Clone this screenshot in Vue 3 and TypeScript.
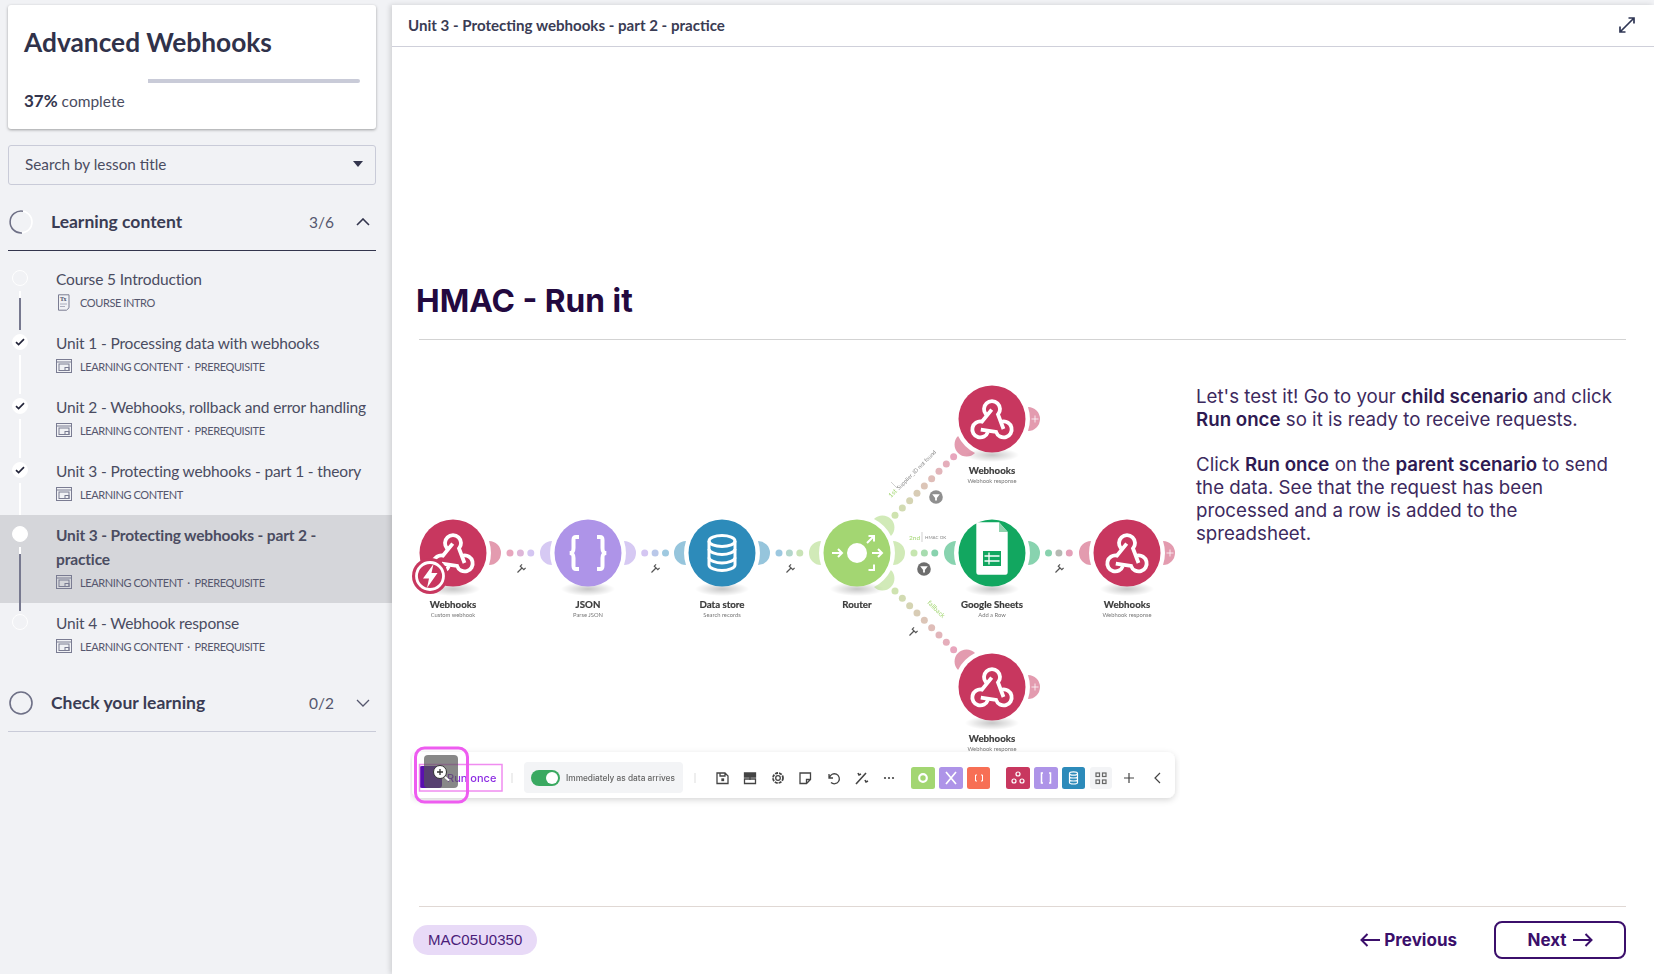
<template>
  <div class="page">
    <aside class="sidebar">
      <div class="course-card">
        <h1 class="course-title">Advanced Webhooks</h1>
        <div class="progress"><div class="progress-done" :style="{ width: '37%' }"></div></div>
        <div class="progress-text"><b>37%</b> complete</div>
      </div>

      <div class="search-select">
        <span>Search by lesson title</span>
        <i class="caret"></i>
      </div>

      <div class="section-head">
        <svg class="ring" width="26" height="26" viewBox="0 0 26 26">
          <circle cx="13" cy="13" r="11" fill="none" stroke="#fff" stroke-width="1.6" />
          <path d="M15 2.2A11 11 0 1 0 14 24" fill="none" stroke="#6e7086" stroke-width="1.6" />
        </svg>
        <span class="section-title">Learning content</span>
        <span class="section-count">3/6</span>
        <svg class="chev" width="14" height="8" viewBox="0 0 14 8"><path d="M1 7l6-6 6 6" fill="none" stroke="#33354d" stroke-width="1.6" /></svg>
      </div>

      <ul class="lessons">
        <li v-for="l in lessons" :key="l.title" class="lesson" :class="{ active: l.state === 'active' }">
          <span class="dot" :class="l.state">
            <svg v-if="l.state === 'done'" width="10" height="8" viewBox="0 0 10 8"><path d="M1 4.2l2.6 2.4L9 1.2" fill="none" stroke="#23253a" stroke-width="1.7" /></svg>
          </span>
          <span v-if="l.line" class="line" :class="l.state">
            <span v-if="l.line === 'dark'" class="line-dark"></span>
          </span>
          <div class="lesson-title">{{ l.title }}</div>
          <div class="lesson-meta">
            <svg v-if="l.intro" class="meta-icon" width="16" height="17" viewBox="0 0 16 17">
              <path d="M2.5 .8h10.5v13l-2.5 2.4H2.500z" fill="none" stroke="#7a7c92" />
              <text x="4" y="7" font-size="6" font-weight="700" fill="#4a4c66" font-family="Liberation Serif, serif">Tx</text>
              <path d="M4 10h7M4 12.500h5" stroke="#9a9cae" stroke-width=".8" />
            </svg>
            <svg v-else class="meta-icon" width="16" height="14" viewBox="0 0 16 14">
              <rect x=".5" y=".5" width="15" height="13" fill="none" stroke="#7a7c92" />
              <path d="M.5 3h15" stroke="#7a7c92" />
              <rect x="3" y="5" width="10" height="6.500" fill="none" stroke="#7a7c92" />
              <rect x="9" y="8.500" width="4" height="3" fill="none" stroke="#7a7c92" />
            </svg>
            <span>{{ l.meta }}</span>
          </div>
        </li>
      </ul>

      <div class="section-head second">
        <svg class="ring" width="26" height="26" viewBox="0 0 26 26">
          <circle cx="13" cy="13" r="11" fill="none" stroke="#6e7086" stroke-width="1.6" />
        </svg>
        <span class="section-title">Check your learning</span>
        <span class="section-count">0/2</span>
        <svg class="chev" width="14" height="8" viewBox="0 0 14 8"><path d="M1 1l6 6 6-6" fill="none" stroke="#55576e" stroke-width="1.3" /></svg>
      </div>
    </aside>

    <main class="main">
      <header class="topbar">
        <span>Unit 3 - Protecting webhooks - part 2 - practice</span>
        <svg width="18" height="18" viewBox="0 0 18 18">
          <path d="M2 16L16 2M10.500 2H16V7.500M2 10.500V16H7.500" fill="none" stroke="#2f3654" stroke-width="1.700" />
        </svg>
      </header>

      <section class="slide">
        <h2 class="slide-title">HMAC - Run it</h2>
        <div class="slide-body">
          <svg class="scenario" width="770" height="440" viewBox="410 370 770 440">
            <defs>
              <radialGradient id="nodeShadow">
                <stop offset="0" stop-color="#000" stop-opacity=".22" />
                <stop offset="1" stop-color="#000" stop-opacity="0" />
              </radialGradient>
              <filter id="barShadow" x="-5%" y="-30%" width="110%" height="170%">
                <feDropShadow dx="0" dy="2" stdDeviation="3" flood-color="#000" flood-opacity=".16" />
              </filter>
            </defs>

            <circle v-for="(d, i) in linkDots" :key="i" :cx="d.x" :cy="d.y" r="3.500" :fill="d.c" />

            <g v-for="w in wrenches" :key="w.x + '-' + w.y" :transform="`translate(${w.x} ${w.y}) rotate(${w.r})`">
              <path d="M0 5V-1M-2.500 -4V-1.500H2.500V-4" fill="none" stroke="#555" stroke-width="1.200" />
            </g>

            <g v-for="f in filters" :key="f.x" :transform="`translate(${f.x} ${f.y})`">
              <circle r="6.800" :fill="f.c" />
              <path d="M-3.800 -2.800H3.800L.9 1V3.500H-.9V1z" fill="#fff" />
            </g>

            <g fill="#a3d672" font-family="Lato, sans-serif" font-size="6.500">
              <text transform="translate(891 498) rotate(-45)">1st</text>
              <text x="909" y="540">2nd</text>
              <text transform="translate(927 603) rotate(45)">fallback</text>
            </g>
            <g fill="#8a8a8a" font-family="Lato, sans-serif" font-size="5.500">
              <text transform="translate(899 490) rotate(-45)">Supplier_ID not found</text>
              <text x="925" y="539" font-size="4.500">HMAC OK</text>
            </g>
            <path d="M897 488l-6-6M922 532v10" stroke="#bbb" stroke-width=".7" />

            <g v-for="n in nodes" :key="n.x + '-' + n.y" :transform="`translate(${n.x} ${n.y})`">
              <ellipse cx="0" cy="36" rx="27" ry="7" fill="url(#nodeShadow)" />
              <path v-for="m in n.moons" :key="m" :transform="`rotate(${m})`" :fill="n.fill" opacity=".5"
                d="M36 -12A12 12 0 0 1 36 12A38 38 0 0 0 36 -12z" />
              <path v-if="n.plus" d="M39.500 0h7M43 -3.500v7" stroke="#fff" stroke-opacity=".75" stroke-width="1" />
              <circle r="33.500" :fill="n.fill" />

              <g v-if="n.kind === 'hook'" fill="none" stroke="#fff" stroke-width="3.800">
                <path v-for="r in [0, 120, 240]" :key="r" :transform="`rotate(${r} 0 3.700)`"
                  d="M-6 -4.500A8 8 0 1 1 6 -4.500L11.500 10" />
              </g>
              <g v-else-if="n.kind === 'json'" fill="none" stroke="#fff" stroke-width="4">
                <path d="M-9 -16H-12C-14 -16 -14.500 -15 -14.500 -13V-5C-14.500 -2 -15 -.5 -18 0C-15 .5 -14.500 2 -14.500 5V13C-14.500 15 -14 16 -12 16H-9" />
                <path d="M9 -16H12C14 -16 14.500 -15 14.500 -13V-5C14.500 -2 15 -.5 18 0C15 .5 14.500 2 14.500 5V13C14.500 15 14 16 12 16H9" />
              </g>
              <g v-else-if="n.kind === 'db'" fill="none" stroke="#fff" stroke-width="3">
                <ellipse cx="0" cy="-12" rx="13" ry="5.500" />
                <path d="M-13 -12V12C-13 15 -6 17.500 0 17.500S13 15 13 12V-12" />
                <path d="M-13 -4C-13 -1 -6 1.500 0 1.500S13 -1 13 -4M-13 4.500C-13 7.500 -6 10 0 10S13 7.500 13 4.500" />
              </g>
              <g v-else-if="n.kind === 'router'" fill="none" stroke="#fff" stroke-width="2">
                <circle r="10" fill="#fff" stroke="none" />
                <path d="M-25 0H-15M-19 -4L-15 0L-19 4M15 0H25M21 -4L25 0L21 4M10 -10L17 -17M11.500 -17H17V-11.500M17 11.500V17H11.500" />
              </g>
              <g v-else>
                <path d="M-15.700 -30.700H7L15.700 -21V19C15.700 20.500 15 21.700 13.500 21.700H-13.500C-15 21.700 -15.700 20.500 -15.700 19z" fill="#fff" />
                <path d="M7 -30.700L15.700 -21H7z" fill="#8fd3ad" />
                <rect x="-9" y="-2" width="18" height="15" fill="#12a760" />
                <path d="M-7.500 3H7.500M-7.500 8H7.500M-3 -.5V11.500" stroke="#fff" stroke-width="1.300" />
              </g>

              <text class="node-name" text-anchor="middle" y="55">{{ n.name }}</text>
              <text class="node-sub" text-anchor="middle" y="63.500">{{ n.sub }}</text>
            </g>

            <g transform="translate(430 576)">
              <circle r="18" fill="#c8375f" />
              <circle r="13.500" fill="#c8375f" stroke="#fff" stroke-width="2.800" />
              <path d="M3.500 -12L-7 2.500H-1L-3 12L7.500 -3H1.500z" fill="#fff" />
            </g>

            <!-- toolbar -->
            <rect x="412" y="752" width="763" height="46" rx="8" fill="#fff" filter="url(#barShadow)" />
            <rect x="419" y="766" width="23" height="22" rx="3" fill="#5a0fb0" />
            <rect x="419.500" y="764.500" width="82.500" height="26.500" fill="none" stroke="#f08cf0" stroke-width="1.500" />
            <text x="447" y="782" class="run-label">Run once</text>
            <path d="M512 773v10M695 773v10" stroke="#ddd" />
            <rect x="524" y="762" width="159" height="31" rx="4" fill="#f3f4f6" />
            <rect x="531" y="770" width="29" height="16" rx="8" fill="#3aa961" />
            <circle cx="552" cy="778" r="6" fill="#fff" />
            <text x="566" y="781" class="imm-label">Immediately as data arrives</text>

            <g fill="none" stroke="#444" stroke-width="1.300">
              <path d="M717 773h8l3 3v7.500h-11zM720 773v3h5v-3" />
              <rect x="722" y="779" width="1.500" height="1.500" fill="#444" />
              <path d="M744.500 773h11v4h-11z" fill="#444" />
              <path d="M744.500 779h11v4.500h-11zM750 776v4" />
              <circle cx="778" cy="778" r="2.300" />
              <circle cx="778" cy="778" r="5" stroke-width="1.800" stroke-dasharray="3 1" />
              <path d="M800 773h10.500v6.500l-4 4H800zM806.500 783.500V779.500h4" />
              <path d="M829 774v4h4M829.500 777.500A5 5 0 1 1 831 782.500" />
              <path d="M856 784L866 773M858 773l1 2 2 -1M865 780l1 2 2 -1" stroke-width="1.600" />
            </g>
            <g fill="#444">
              <circle cx="885" cy="778" r="1.100" />
              <circle cx="889" cy="778" r="1.100" />
              <circle cx="893" cy="778" r="1.100" />
            </g>

            <g v-for="s in toolSquares" :key="s.x">
              <rect :x="s.x" y="767" :width="s.w" height="22" rx="2.500" :fill="s.c" />
            </g>
            <circle cx="923" cy="778" r="3.800" fill="none" stroke="#fff" stroke-width="2.200" />
            <path d="M946 772l10 12M956 772l-10 12" stroke="#fff" stroke-width="1.700" />
            <path d="M977 775h-1.500v6h1.500M981 775h1.500v6H981" fill="none" stroke="#fff" />
            <g fill="none" stroke="#fff" stroke-width="1.200">
              <circle cx="1018" cy="774" r="2" /><circle cx="1014" cy="781" r="2" /><circle cx="1022" cy="781" r="2" />
              <path d="M1043 773h-1.500v10h1.500M1049 773h1.500v10H1049" stroke-width="1.500" />
              <ellipse cx="1073.500" cy="773.500" rx="4" ry="1.700" />
              <path d="M1069.500 773.500v9c0 2 8 2 8 0v-9M1069.500 776.500c0 2 8 2 8 0M1069.500 779.500c0 2 8 2 8 0" />
            </g>
            <rect x="1090" y="767" width="22" height="22" rx="3" fill="#f3f4f6" />
            <g fill="none" stroke="#666" stroke-width="1.200">
              <rect x="1096" y="773" width="3.500" height="3.500" /><rect x="1102.500" y="773" width="3.500" height="3.500" />
              <rect x="1096" y="780" width="3.500" height="3.500" /><rect x="1102.500" y="780" width="3.500" height="3.500" />
            </g>
            <path d="M1124 778h10M1129 773v10M1160 773l-5 5 5 5" fill="none" stroke="#444" stroke-width="1.200" />

            <!-- zoom hint over the picture -->
            <rect x="424" y="755" width="34" height="33" rx="4" fill="#555" fill-opacity=".7" />
            <circle cx="440" cy="772" r="6.500" fill="#fff" stroke="#333" stroke-width="1" />
            <path d="M437 772h6M440 769v6" stroke="#333" stroke-width="1.300" />
            <path d="M445 777l4 3.500" stroke="#fff" stroke-width="2" />
            <rect x="415.500" y="748" width="52" height="54" rx="9" fill="none" stroke="#ee5cf0" stroke-width="3" />
          </svg>

          <div class="slide-text">
            <p>Let's test it! Go to your <b>child scenario</b> and click <b>Run once</b> so it is ready to receive requests.</p>
            <p>Click <b>Run once</b> on the <b>parent scenario</b> to send the data. See that the request has been processed and a row is added to the spreadsheet.</p>
          </div>
        </div>

        <footer class="slide-foot">
          <span class="code-chip">MAC05U0350</span>
          <div class="nav">
            <a class="nav-prev">
              <svg width="20" height="14" viewBox="0 0 20 14"><path d="M20 7H1.500M7.500 1L1.500 7l6 6" fill="none" stroke="#3b0f6b" stroke-width="2" /></svg>
              Previous
            </a>
            <a class="nav-next">
              Next
              <svg width="20" height="14" viewBox="0 0 20 14"><path d="M0 7h18.500M12.500 1l6 6-6 6" fill="none" stroke="#3b0f6b" stroke-width="2" /></svg>
            </a>
          </div>
        </footer>
      </section>
    </main>
  </div>
</template>

<script setup lang="ts">
interface Lesson {
  title: string
  meta: string
  state: 'todo' | 'done' | 'active'
  line?: 'light' | 'dark'
  intro?: boolean
}

const lessons: Lesson[] = [
  { title: 'Course 5 Introduction', meta: 'COURSE INTRO', state: 'todo', line: 'dark', intro: true },
  { title: 'Unit 1 - Processing data with webhooks', meta: 'LEARNING CONTENT  ·  PREREQUISITE', state: 'done', line: 'light' },
  { title: 'Unit 2 - Webhooks, rollback and error handling', meta: 'LEARNING CONTENT  ·  PREREQUISITE', state: 'done', line: 'light' },
  { title: 'Unit 3 - Protecting webhooks - part 1 - theory', meta: 'LEARNING CONTENT', state: 'done', line: 'light' },
  { title: 'Unit 3 - Protecting webhooks - part 2 - practice', meta: 'LEARNING CONTENT  ·  PREREQUISITE', state: 'active', line: 'dark' },
  { title: 'Unit 4 - Webhook response', meta: 'LEARNING CONTENT  ·  PREREQUISITE', state: 'todo' }
]

const hook = '#c8375f'
const nodes = [
  { x: 453, y: 553, fill: hook, kind: 'hook', name: 'Webhooks', sub: 'Custom webhook', moons: [0] },
  { x: 588, y: 553, fill: '#ae94e8', kind: 'json', name: 'JSON', sub: 'Parse JSON', moons: [180, 0] },
  { x: 722, y: 553, fill: '#2d8bba', kind: 'db', name: 'Data store', sub: 'Search records', moons: [180, 0] },
  { x: 857, y: 553, fill: '#a3d672', kind: 'router', name: 'Router', sub: '', moons: [180, 0, -45, 45] },
  { x: 992, y: 553, fill: '#12a760', kind: 'sheet', name: 'Google Sheets', sub: 'Add a Row', moons: [180, 0] },
  { x: 1127, y: 553, fill: hook, kind: 'hook', name: 'Webhooks', sub: 'Webhook response', moons: [180, 0], plus: true },
  { x: 992, y: 419, fill: hook, kind: 'hook', name: 'Webhooks', sub: 'Webhook response', moons: [135, 0], plus: true },
  { x: 992, y: 687, fill: hook, kind: 'hook', name: 'Webhooks', sub: 'Webhook response', moons: [-135, 0], plus: true }
]

// blends two hex colours, used for the dotted links between modules
const mix = (a: string, b: string, t: number): string => {
  const ch = (hex: string, i: number) => parseInt(hex.substring(1 + i * 2, 3 + i * 2), 16)
  const out = [0, 1, 2].map((i) => Math.round(ch(a, i) + (ch(b, i) - ch(a, i)) * t))
  return `rgb(${out.join(',')})`
}

const link = (x: number, y: number, dx: number, dy: number, n: number, from: string, to: string) =>
  Array.from({ length: n }, (_, i) => ({
    x: x + dx * i,
    y: y + dy * i,
    c: mix(from, to, n > 1 ? i / (n - 1) : 0)
  }))

const linkDots = [
  ...link(510, 553, 10.4, 0, 3, '#e8a6bd', '#d4c6f2'),
  ...link(644.7, 553, 10.4, 0, 3, '#d4c6f2', '#9fc9e0'),
  ...link(779, 553, 10.4, 0, 3, '#9cc8e0', '#c9e3b6'),
  ...link(914, 553, 10.4, 0, 3, '#c6e6b0', '#88d2ae'),
  ...link(1048.5, 553, 10.4, 0, 3, '#88d2ae', '#e4a0b8'),
  ...link(895, 515.3, 7.33, -7.33, 9, '#cfe3b0', '#e8a6bd'),
  ...link(895, 591, 7.33, 7.33, 9, '#cfe3b0', '#e8a6bd')
]

const wrenches = [
  { x: 521, y: 569, r: 45 },
  { x: 655, y: 569, r: 45 },
  { x: 790, y: 569, r: 45 },
  { x: 1059, y: 569, r: 45 },
  { x: 913, y: 632, r: 45 }
]

const filters = [
  { x: 936, y: 497, c: '#8f8f8f' },
  { x: 924, y: 569, c: '#6e6e6e' }
]

const toolSquares = [
  { x: 911, w: 24, c: '#a3d672' },
  { x: 939, w: 24, c: '#ae94e8' },
  { x: 967, w: 23, c: '#f76f55' },
  { x: 1006, w: 24, c: hook },
  { x: 1034, w: 24, c: '#ae94e8' },
  { x: 1062, w: 23, c: '#2d8bba' }
]
</script>

<style>
html, body { margin: 0; background: #fff; }
</style>

<style scoped>
.page {
  display: flex;
  height: 974px;
  overflow: hidden;
  font-family: Lato, "Noto Sans", sans-serif;
  color: #33354d;
  background: #f1f2f5;
}

.sidebar {
  width: 392px;
  flex: none;
  box-sizing: border-box;
  padding-top: 5px;
}

.course-card {
  margin: 0 16px 0 8px;
  padding: 19px 16px 18px;
  background: #fff;
  border-radius: 3px;
  box-shadow: 0 1px 3px rgba(0, 0, 0, .35);
}
.course-title {
  margin: 0;
  font-size: 26.3px;
  line-height: 36px;
  font-weight: 700;
  color: #30324a;
}
.progress {
  height: 4px;
  margin-top: 19px;
  background: #c9cbd8;
  border-radius: 2px;
}
.progress-done { height: 100%; background: #fff; }
.progress-text { margin-top: 8px; font-size: 15.5px; line-height: 20px; color: #4a4c61; }
.progress-text b { font-size: 17px; color: #33354d; }

.search-select {
  display: flex;
  align-items: center;
  justify-content: space-between;
  height: 40px;
  box-sizing: border-box;
  margin: 16px 16px 0 8px;
  padding: 0 12px 2px 16px;
  border: 1px solid #c9cbd8;
  border-radius: 3px;
  font-size: 15.3px;
  color: #4a4c61;
}
.caret {
  width: 0;
  height: 0;
  border-left: 5px solid transparent;
  border-right: 5px solid transparent;
  border-top: 6px solid #33354d;
}

.section-head {
  display: flex;
  align-items: center;
  height: 57px;
  margin: 8px 16px 0 8px;
  border-bottom: 1px solid #33354d;
}
.section-head.second { margin-top: 7px; border-bottom-color: #c9cbd8; }
.ring { flex: none; }
.section-title { margin-left: 17px; font-size: 17.5px; font-weight: 700; color: #3a3c54; }
.section-count { margin-left: auto; font-size: 15.5px; color: #55576e; }
.chev { margin: 0 6px 0 22px; }

.lessons { list-style: none; margin: 8px 0 0; padding: 0; }
.lesson {
  position: relative;
  padding: 8px 8px 11px 56px;
}
.lesson.active { background: #d5d6da; padding-right: 30px; }
.lesson.active .lesson-title { font-weight: 700; }
.lesson-title { font-size: 15.5px; letter-spacing: -.15px; line-height: 24px; color: #4a4c61; }
.lesson-meta {
  display: flex;
  align-items: center;
  height: 20px;
  margin-top: 1px;
  font-size: 11px;
  letter-spacing: -.4px;
  color: #55576e;
  white-space: pre;
}
.meta-icon { margin-right: 8px; }

.dot {
  position: absolute;
  left: 12px;
  top: 11px;
  width: 16px;
  height: 16px;
  box-sizing: border-box;
  border: 1px solid #fff;
  border-radius: 50%;
  display: flex;
  align-items: center;
  justify-content: center;
}
.dot.done, .dot.active { background: #fff; }
.line {
  position: absolute;
  left: 19px;
  top: 32px;
  width: 2px;
  height: 39px;
  background: #fff;
}
.line.active { height: 64px; }
.line-dark {
  position: absolute;
  left: 0;
  right: 0;
  bottom: 0;
  top: 7px;
  background: #77798f;
}

.main {
  flex: 1;
  display: flex;
  flex-direction: column;
  margin-top: 5px;
  min-width: 0;
  background: #fff;
  box-shadow: -2px 0 5px rgba(0, 0, 0, .14);
  position: relative;
}
.topbar {
  display: flex;
  align-items: center;
  justify-content: space-between;
  height: 39px;
  padding: 0 18px 2px 16px;
  border-bottom: 1px solid #cfd0da;
  font-size: 15.1px;
  font-weight: 700;
  color: #3a3c54;
}

.slide {
  flex: 1;
  display: flex;
  flex-direction: column;
  padding: 0 28px 0 27px;
  font-family: Inter, sans-serif;
  color: #2e1a52;
}
.slide-title {
  margin: 234px 0 0 -3px;
  font-size: 31.7px;
  line-height: 40px;
  font-weight: 700;
  color: #23093f;
}
.slide-body {
  display: flex;
  margin-top: 18px;
  border-top: 1px solid #d3d3d3;
}
.scenario {
  flex: none;
  margin: 30px 16px 0 -9px;
  filter: blur(.35px);
}
.node-name { font: 700 9.7px Lato, sans-serif; fill: #3a3a3a; stroke: #3a3a3a; stroke-width: .2px; }
.node-sub { font: 400 5.8px Lato, sans-serif; fill: #777; }
.run-label { font: 500 11px Inter, sans-serif; fill: #8b2be2; }
.imm-label { font: 500 8.3px Inter, sans-serif; fill: #666; }
.slide-text { margin-top: 45px; font-size: 18.7px; line-height: 23px; color: #3d2a5e; }
.slide-text p { margin: 0 0 21.5px; }
.slide-text b { font-weight: 600; color: #2e1a52; }

.slide-foot {
  margin-top: auto;
  display: flex;
  align-items: center;
  justify-content: space-between;
  height: 65px;
  padding-bottom: 2px;
  border-top: 1px solid #e0d8d4;
}
.code-chip {
  margin-left: -6px;
  padding: 0 15px;
  height: 30px;
  border-radius: 15px;
  background: #e8daf7;
  color: #4b1c7a;
  font: 500 15px/30px "Liberation Sans", sans-serif;
}
.nav { display: flex; align-items: center; gap: 37px; }
.nav a {
  display: flex;
  align-items: center;
  gap: 6px;
  font-size: 17px;
  font-weight: 700;
  color: #3b0f6b;
}
.nav a.nav-prev { gap: 4px; }
.nav-next {
  justify-content: center;
  width: 132px;
  height: 38px;
  box-sizing: border-box;
  border: 2px solid #3b0f6b;
  border-radius: 8px;
}
</style>
